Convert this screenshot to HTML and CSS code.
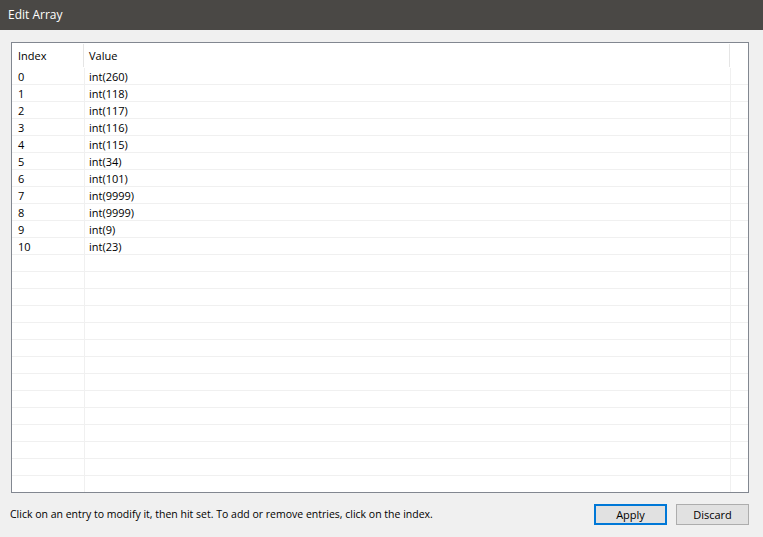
FILE: index.html
```html
<!DOCTYPE html>
<html>
<head>
<meta charset="utf-8">
<link rel="stylesheet" href="styles.css">
</head>
<body>
<div class="window">
  <div class="titlebar">Edit Array</div>
  <div class="content">
    <div class="list">
      <div class="header">
        <div class="hcell c1">Index</div>
        <div class="hcell c2">Value</div>
        <div class="hcell c3"></div>
      </div>
      <div class="rows">
        <div class="row"><div class="cell c1">0</div><div class="cell c2">int(260)</div><div class="cell c3"></div></div>
        <div class="row"><div class="cell c1">1</div><div class="cell c2">int(118)</div><div class="cell c3"></div></div>
        <div class="row"><div class="cell c1">2</div><div class="cell c2">int(117)</div><div class="cell c3"></div></div>
        <div class="row"><div class="cell c1">3</div><div class="cell c2">int(116)</div><div class="cell c3"></div></div>
        <div class="row"><div class="cell c1">4</div><div class="cell c2">int(115)</div><div class="cell c3"></div></div>
        <div class="row"><div class="cell c1">5</div><div class="cell c2">int(34)</div><div class="cell c3"></div></div>
        <div class="row"><div class="cell c1">6</div><div class="cell c2">int(101)</div><div class="cell c3"></div></div>
        <div class="row"><div class="cell c1">7</div><div class="cell c2">int(9999)</div><div class="cell c3"></div></div>
        <div class="row"><div class="cell c1">8</div><div class="cell c2">int(9999)</div><div class="cell c3"></div></div>
        <div class="row"><div class="cell c1">9</div><div class="cell c2">int(9)</div><div class="cell c3"></div></div>
        <div class="row"><div class="cell c1">10</div><div class="cell c2">int(23)</div><div class="cell c3"></div></div>
        <div class="row"><div class="cell c1"></div><div class="cell c2"></div><div class="cell c3"></div></div>
        <div class="row"><div class="cell c1"></div><div class="cell c2"></div><div class="cell c3"></div></div>
        <div class="row"><div class="cell c1"></div><div class="cell c2"></div><div class="cell c3"></div></div>
        <div class="row"><div class="cell c1"></div><div class="cell c2"></div><div class="cell c3"></div></div>
        <div class="row"><div class="cell c1"></div><div class="cell c2"></div><div class="cell c3"></div></div>
        <div class="row"><div class="cell c1"></div><div class="cell c2"></div><div class="cell c3"></div></div>
        <div class="row"><div class="cell c1"></div><div class="cell c2"></div><div class="cell c3"></div></div>
        <div class="row"><div class="cell c1"></div><div class="cell c2"></div><div class="cell c3"></div></div>
        <div class="row"><div class="cell c1"></div><div class="cell c2"></div><div class="cell c3"></div></div>
        <div class="row"><div class="cell c1"></div><div class="cell c2"></div><div class="cell c3"></div></div>
        <div class="row"><div class="cell c1"></div><div class="cell c2"></div><div class="cell c3"></div></div>
        <div class="row"><div class="cell c1"></div><div class="cell c2"></div><div class="cell c3"></div></div>
        <div class="row"><div class="cell c1"></div><div class="cell c2"></div><div class="cell c3"></div></div>
        <div class="row"><div class="cell c1"></div><div class="cell c2"></div><div class="cell c3"></div></div>
      </div>
    </div>
    <div class="footer">
      <div class="hint">Click on an entry to modify it, then hit set. To add or remove entries, click on the index.</div>
      <div class="buttons">
        <button class="btn btn-default">Apply</button>
        <button class="btn">Discard</button>
      </div>
    </div>
  </div>
</div>
</body>
</html>
```
FILE: styles.css
```css
* { box-sizing: border-box; }
html, body {
  margin: 0;
  padding: 0;
  background: #f0f0f0;
  font-family: "Open Sans", "Noto Sans", "Liberation Sans", sans-serif;
  font-size: 11px;
  color: #000;
}
.window {
  width: 763px;
  height: 537px;
  display: flex;
  flex-direction: column;
}
.titlebar {
  height: 30px;
  background: #4a4845;
  color: #fff;
  font-size: 12px;
  line-height: 30px;
  padding-left: 8px;
  flex: none;
}
.content {
  flex: 1;
  padding: 12px 14px 0 11px;
  display: flex;
  flex-direction: column;
}
.list {
  height: 451px;
  border: 1px solid #828790;
  background: #fff;
  overflow: hidden;
  flex: none;
}
.header {
  display: flex;
  height: 25px;
  align-items: center;
}
.hcell {
  height: 23px;
  line-height: 23px;
  border-right: 1px solid #e5e5e5;
}
.header .c1 { width: 72px; padding-left: 6px; }
.header .c2 { width: 646px; padding-left: 5px; }
.header .c3 { flex: 1; border-right: none; }
.row {
  display: flex;
  height: 17px;
  border-bottom: 1px solid #f0f0f0;
}
.cell {
  height: 16px;
  line-height: 16px;
  padding-top: 1px;
  border-right: 1px solid #f0f0f0;
}
.row .c1 { width: 73px; padding-left: 6px; }
.row .c2 { width: 646px; padding-left: 4px; }
.row .c3 { flex: 1; border-right: none; }
.footer {
  flex: 1;
  display: flex;
  align-items: center;
  justify-content: space-between;
  padding-bottom: 2px;
}
.hint {
  margin-left: -1px;
  font-size: 10.5px;
}
.buttons {
  display: flex;
  gap: 9px;
}
.btn {
  width: 73px;
  height: 21px;
  background: #e1e1e1;
  border: 1px solid #adadad;
  font-family: inherit;
  font-size: 11px;
  color: #000;
  padding: 0;
  margin: 0;
}
.btn-default {
  border: 2px solid #0078d7;
}
```
